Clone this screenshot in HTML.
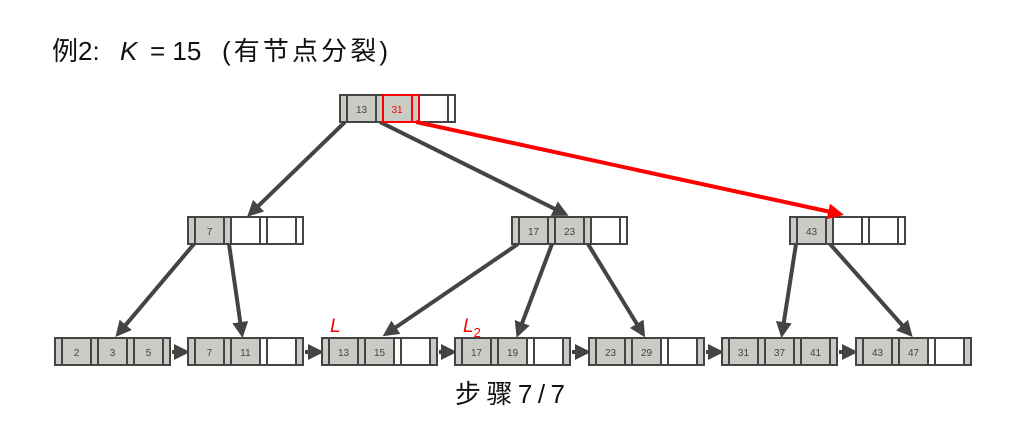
<!DOCTYPE html>
<html><head><meta charset="utf-8"><style>
body{margin:0;background:#fff;width:1029px;height:447px;overflow:hidden;font-family:"Liberation Sans","Noto Sans CJK SC",sans-serif}
svg{position:absolute;left:0;top:0}
</style></head><body>
<svg id="s" width="1029" height="447" viewBox="0 0 1029 447" xmlns="http://www.w3.org/2000/svg">
<defs>
<marker id="a" markerWidth="4" markerHeight="4" refX="3" refY="2" orient="auto" markerUnits="strokeWidth"><path d="M0,0 L4,2 L0,4 z" fill="#444"/></marker>
<marker id="r" markerWidth="4" markerHeight="4" refX="3" refY="2" orient="auto" markerUnits="strokeWidth"><path d="M0,0 L4,2 L0,4 z" fill="#f00"/></marker>
</defs>
<g font-size="26" fill="#111">
<text x="52" y="60">例2:</text>
<text x="120" y="60" font-style="italic">K</text>
<text x="150" y="60">= 15</text>
<text x="222" y="60" textLength="166" lengthAdjust="spacing">(有节点分裂)</text>
</g>
<text x="455" y="403" font-size="26" fill="#111" textLength="110" lengthAdjust="spacing">步骤7/7</text>
<text x="330" y="332" font-size="19" fill="#f00" font-style="italic">L</text>
<text x="463" y="332" font-size="19" fill="#f00" font-style="italic">L<tspan font-size="13" font-style="normal" dy="5">2</tspan></text>
<g id="g"></g>
</svg>
<script>
var g=document.getElementById('g'),h='';
function node(x,y,keys,leaf){var cx=x,pw=7,kw=29,H=27;
 for(var i=0;i<7;i++){var w=i%2?kw:pw;var filled;
  if(i%2){filled=keys[(i-1)/2]!==undefined;}else{var idx=i/2;filled=(idx<=keys.length);if(leaf&&i==6)filled=true;if(leaf&&idx==keys.length&&i!=6)filled=false;}
  h+='<rect x="'+cx+'" y="'+y+'" width="'+w+'" height="'+H+'" fill="'+(filled?'#c8ccc4':'#fff')+'" stroke="#444" stroke-width="2"/>';
  if(i%2&&filled)h+='<text x="'+(cx+kw/2)+'" y="'+(y+18)+'" font-size="10" fill="#444" text-anchor="middle">'+keys[(i-1)/2]+'</text>';
  cx+=w;}
}
function ar(x1,y1,x2,y2,red){h+='<line x1="'+x1+'" y1="'+y1+'" x2="'+x2+'" y2="'+y2+'" stroke="'+(red?'#f00':'#444')+'" stroke-width="4" marker-end="url(#'+(red?'r':'a')+')"/>';}
ar(345,122,250,214);ar(380,122,565,214);
ar(194,244,118,334);ar(229,244,242,334);
ar(518,244,386,334);ar(552,244,518,334);ar(588,244,643,334);
ar(796,244,782,334);ar(830,244,910,334);
var L=[[55,[2,3,5]],[188,[7,11]],[322,[13,15]],[455,[17,19]],[589,[23,29]],[722,[31,37,41]],[856,[43,47]]];
for(var i=0;i<6;i++){var e=L[i][0]+115;ar(e+2,352,L[i+1][0]-2,352);}
node(340,95,[13,31],false);
node(188,217,[7],false);node(512,217,[17,23],false);node(790,217,[43],false);
L.forEach(function(l){node(l[0],338,l[1],true);});
h+='<rect x="383" y="95" width="29" height="27" fill="#c8ccc4" stroke="#f00" stroke-width="2"/><rect x="412" y="95" width="7" height="27" fill="#c8ccc4" stroke="#f00" stroke-width="2"/>';
h+='<text x="397" y="113" font-size="10" fill="#f00" text-anchor="middle">31</text>';
ar(416,122,840,214,true);
g.innerHTML=h;
</script>
</body></html>
